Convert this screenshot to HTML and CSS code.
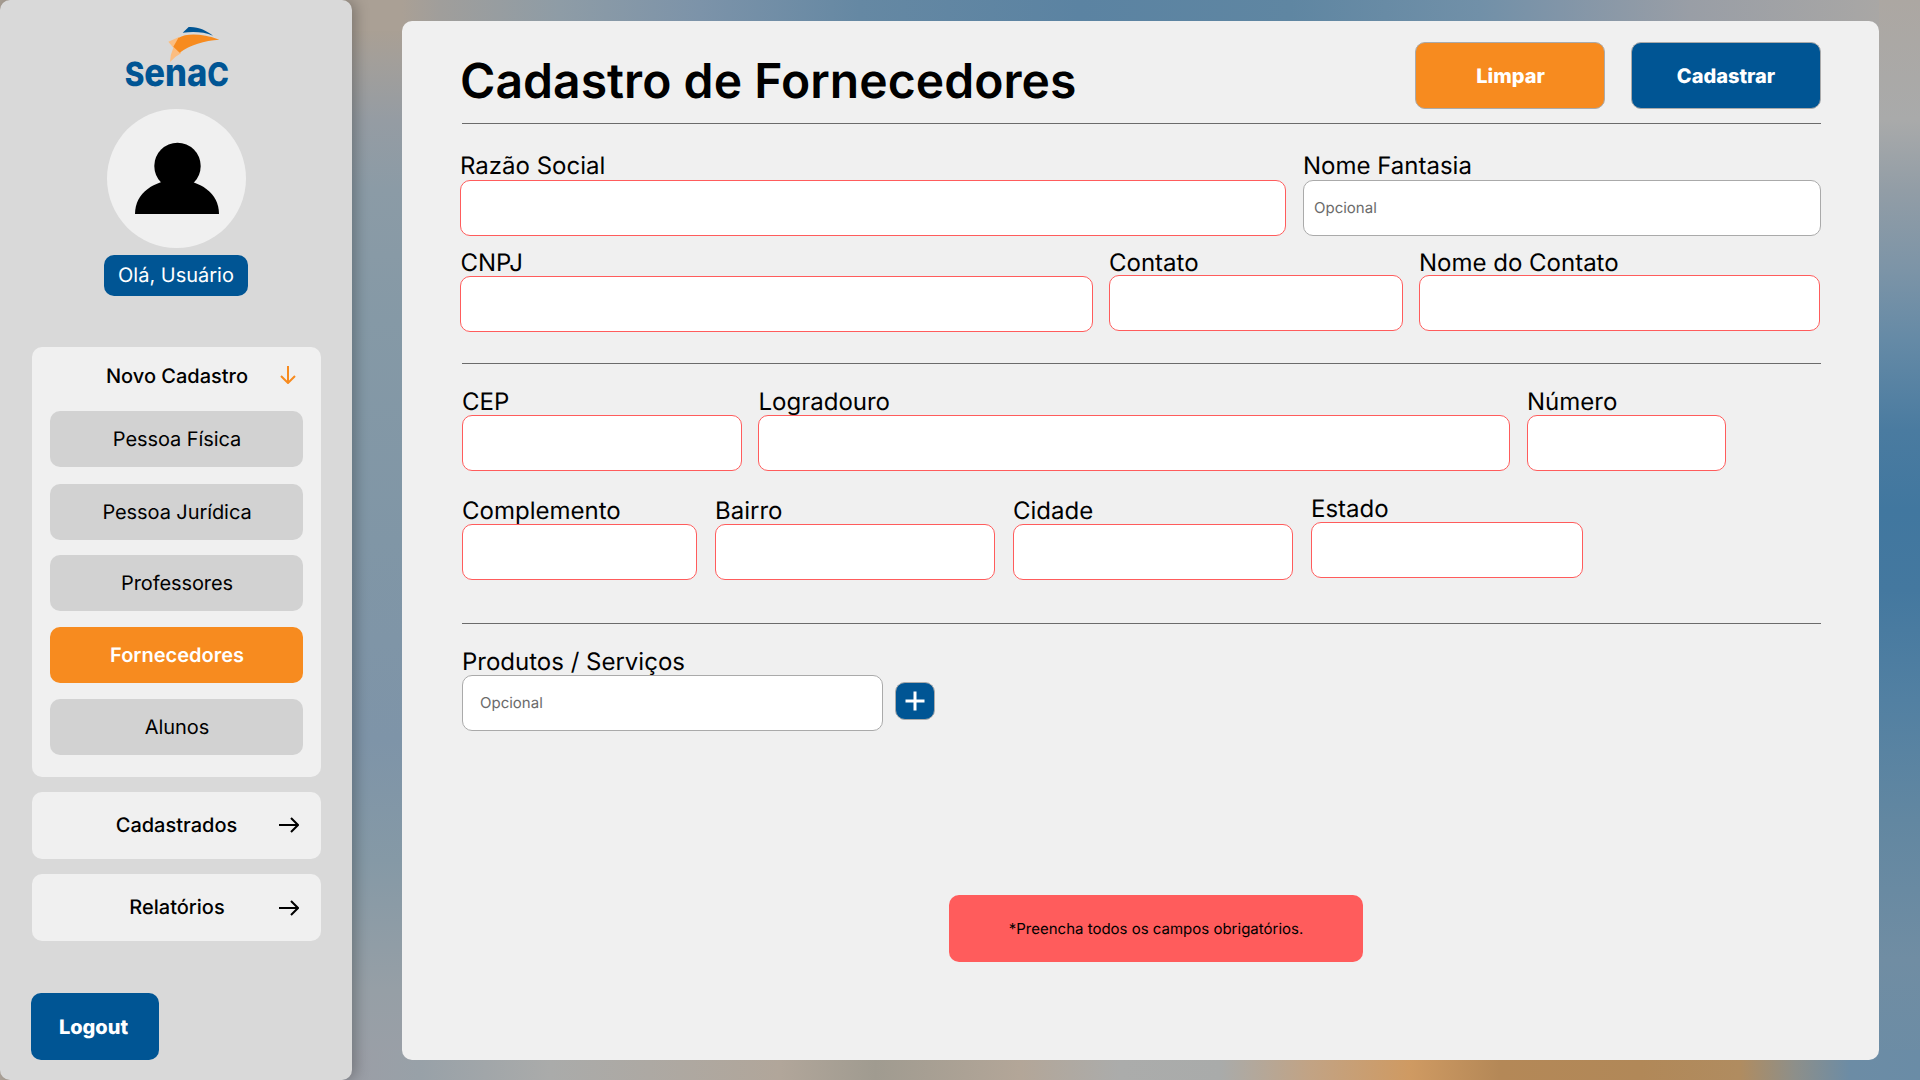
FILE: index.html
```html
<!DOCTYPE html>
<html lang="pt-BR">
<head>
<meta charset="utf-8">
<title>Cadastro de Fornecedores</title>
<link rel="stylesheet" href="styles.css">
</head>
<body>
<aside class="sidebar">
  <svg class="logo" viewBox="0 0 312 186" role="img" aria-label="Senac">
    <path fill="#fbbd80" d="M130 47 162 33 168 82 Q148 93 135 108 Q136 84 145 65Z"/>
    <path fill="#f78b1f" d="M160 36 C185 21 230 22 283 41 C238 43 195 57 164 80 L145 62Z"/>
    <path fill="#005594" d="M173 20 191 3 C218 1 246 14 264 29 C237 17 204 17 173 20Z"/>
    <text class="logo-word" x="-1" y="180" textLength="313" lengthAdjust="spacingAndGlyphs"><tspan font-size="100">S</tspan><tspan font-size="116">ena</tspan><tspan font-size="98">C</tspan></text>
  </svg>
  <div class="avatar">
    <svg viewBox="0 0 84 72" width="84" height="72"><circle cx="42.5" cy="24" r="23.2"/><path d="M0 72C0 51 19 38 42 38S84 51 84 72Z"/></svg>
  </div>
  <div class="greeting">Olá, Usuário</div>
  <nav class="menu">
    <section class="menu-group">
      <div class="menu-head">Novo Cadastro
        <svg class="arrow-down" viewBox="0 0 16 18"><path d="M8 0V16.5M1 10 8 17 15 10"/></svg>
      </div>
      <a class="item">Pessoa Física</a>
      <a class="item item-second">Pessoa Jurídica</a>
      <a class="item item-third">Professores</a>
      <a class="item active">Fornecedores</a>
      <a class="item">Alunos</a>
    </section>
    <a class="menu-link">Cadastrados
      <svg class="arrow-right" viewBox="0 0 20 16"><path d="M0 8H19M12 1 19 8 12 15"/></svg>
    </a>
    <a class="menu-link reports">Relatórios
      <svg class="arrow-right" viewBox="0 0 20 16"><path d="M0 8H19M12 1 19 8 12 15"/></svg>
    </a>
  </nav>
  <button class="logout">Logout</button>
</aside>
<main class="panel">
  <header class="panel-head">
    <h1>Cadastro de Fornecedores</h1>
    <div class="actions">
      <button class="btn btn-orange">Limpar</button>
      <button class="btn btn-blue">Cadastrar</button>
    </div>
  </header>
  <hr>
  <form class="form">
    <div class="row row-company">
      <div class="field"><label>Razão Social</label><input></div>
      <div class="field"><label>Nome Fantasia</label><input class="optional" placeholder="Opcional"></div>
    </div>
    <div class="row row-contact">
      <div class="field cnpj"><label>CNPJ</label><input></div>
      <div class="field"><label>Contato</label><input></div>
      <div class="field"><label>Nome do Contato</label><input></div>
    </div>
    <hr class="rule-address">
    <div class="row row-street">
      <div class="field"><label>CEP</label><input></div>
      <div class="field"><label class="nudge">Logradouro</label><input></div>
      <div class="field"><label>Número</label><input></div>
    </div>
    <div class="row row-city">
      <div class="field"><label>Complemento</label><input></div>
      <div class="field"><label>Bairro</label><input></div>
      <div class="field"><label>Cidade</label><input></div>
      <div class="field state"><label>Estado</label><input></div>
    </div>
    <hr class="rule-products">
    <div class="row row-products">
      <div class="field"><label>Produtos / Serviços</label><input class="optional" placeholder="Opcional"></div>
      <button type="button" class="add" aria-label="Adicionar"><svg viewBox="0 0 20 20" width="20" height="20"><path d="M10 .5V19.5M.5 10H19.5"/></svg></button>
    </div>
  </form>
  <div class="alert">*Preencha todos os campos obrigatórios.</div>
</main>
</body>
</html>
```
FILE: styles.css
```css
* { box-sizing: border-box; }

body {
  margin: 0;
  width: 1920px;
  height: 1080px;
  overflow: hidden;
  display: flex;
  font-family: Inter, "Liberation Sans", sans-serif;
  text-rendering: geometricPrecision;
  color: #000;
  background:
    linear-gradient(90deg, #aaa095 402px, #a09e9b 440px, #8e9ca6 560px, #7c93a9 700px, #6588a3 860px, #5b83a2 1080px, #5f86a2 1290px, #7190a8 1480px, #8195a8 1560px, #999ea6 1690px, #a9a7a5 1879px) 0 0 / 1879px 31px no-repeat,
    linear-gradient(90deg, #b0a69c 0, #9b9ea6 352px, #98a1a8 420px, #aaabaa 550px, #b1a69a 780px, #a09b90 875px, #b3a698 1020px, #abacab 1120px, #a9abaa 1220px, #c2a384 1310px, #cf9a62 1410px, #b48857 1500px, #b18858 1640px, #b08c60 1740px, #8d8f8a 1795px, #6c8ca5 1850px, #6a8ca6 1920px) 0 1050px / 1920px 30px no-repeat,
    linear-gradient(180deg, #b0a08e 0, #a39f9a 60px, #959ca3 120px, #8b9ba6 190px, #8599a6 320px, #8096a6 540px, #7e94a8 740px, #8599a6 860px, #969fa6 990px, #9b9fa7 1080px) 0 0 / 402px 1080px no-repeat,
    linear-gradient(180deg, #aca7a2 0, #a9aaaa 120px, #929da6 190px, #7c94a7 270px, #658aa6 340px, #4a7ba0 430px, #41779f 510px, #44789f 590px, #5280a2 700px, #6287a1 820px, #708da3 960px, #6b8ca5 1080px) 1879px 0 / 41px 1080px no-repeat;
}

.sidebar {
  width: 352px;
  height: 1080px;
  display: flex;
  flex-direction: column;
  align-items: center;
  padding-top: 26px;
  background: #d9d9d9;
  border-radius: 10px;
  box-shadow: 4px 0 14px rgba(0, 0, 0, .25);
}

.logo {
  width: 104px;
  height: 62px;
  margin-left: 2px;
  overflow: visible;
}

.logo-word {
  fill: #005594;
  font-family: Inter, sans-serif;
  font-weight: 800;
}

.avatar {
  width: 139px;
  height: 139px;
  margin-top: 21px;
  padding: 33px 0 0 2px;
  border-radius: 50%;
  background: #f0f0f0;
  display: flex;
  justify-content: center;
}

.greeting {
  width: 144px;
  height: 41px;
  margin-top: 7px;
  border-radius: 10px;
  background: #005594;
  color: #fff;
  font-size: 20px;
  line-height: 40px;
  text-align: center;
}

.menu {
  width: 289px;
  margin-top: 51px;
  margin-left: 1px;
  display: flex;
  flex-direction: column;
  gap: 15px;
  font-size: 20px;
  font-weight: 500;
}

.menu-group {
  height: 430px;
  padding: 0 18px;
  background: #f0f0f0;
  border-radius: 10px;
}

.menu-head {
  position: relative;
  height: 64px;
  padding: 17px 0 0 1px;
  line-height: 24px;
  text-align: center;
}

.arrow-down {
  position: absolute;
  top: 19px;
  right: 7px;
  width: 16px;
  height: 18px;
  fill: none;
  stroke: #f78b1f;
  stroke-width: 2;
}

.item {
  display: block;
  height: 56px;
  margin-bottom: 16px;
  padding-left: 1px;
  border-radius: 10px;
  background: #d2d2d2;
  font-weight: 400;
  line-height: 56px;
  letter-spacing: -.08px;
  text-align: center;
}

.item-second { margin-top: 17px; margin-bottom: 15px; }

.item.active {
  background: #f78b1f;
  color: #fff;
  font-weight: 600;
  letter-spacing: 0;
}

.menu-link {
  position: relative;
  height: 67px;
  border-radius: 10px;
  background: #f0f0f0;
  line-height: 66px;
  text-align: center;
}

.arrow-right {
  position: absolute;
  top: 25px;
  right: 22px;
  width: 20px;
  height: 16px;
  fill: none;
  stroke: #000;
  stroke-width: 2;
}

.reports { padding-left: 1px; }
.reports .arrow-right { top: 26px; }

button {
  padding: 0;
  font: 800 20px/24px Inter, sans-serif;
  text-rendering: inherit;
  color: #fff;
  border-radius: 10px;
}

.logout {
  align-self: flex-start;
  width: 128px;
  height: 67px;
  margin: 52px 0 0 31px;
  padding-right: 3px;
  border: 0;
  background: #005594;
}

.panel {
  width: 1477px;
  height: 1039px;
  margin: 21px 0 0 50px;
  padding: 21px 58px 0;
  background: #f0f0f0;
  border-radius: 10px;
}

.panel-head {
  height: 81px;
  display: flex;
  justify-content: space-between;
}

h1 {
  margin: 10px 0 0;
  font-size: 48px;
  font-weight: 600;
  line-height: 58px;
  letter-spacing: .06px;
}

.actions {
  display: flex;
  gap: 26px;
}

.btn {
  width: 190px;
  height: 67px;
  border: 1px solid #aaa;
}

.btn-orange { background: #f78b1f; padding-left: 1px; }
.btn-blue { background: #005594; }

hr {
  height: 1px;
  margin: 0 0 27px 2px;
  border: 0;
  background: #6b6b6b;
}

.rule-address { margin: 31px 0 23px 2px; }
.rule-products { margin: 43px 0 23px 2px; }

.row { display: grid; }

.row-company {
  grid-template-columns: 826px 518px;
  column-gap: 17px;
}

.row-contact {
  grid-template-columns: 633px 294px 401px;
  column-gap: 16px;
  margin-top: 12px;
}

.row-street {
  grid-template-columns: 280px 752px 199px;
  column-gap: 16px;
  margin-left: 2px;
}

.row-street .field:last-child { margin: 0 -1px 0 1px; }

.row-city {
  grid-template-columns: 235px 280px 280px 272px;
  column-gap: 18px;
  align-items: end;
  margin: 23px 0 0 2px;
}

.row-products {
  grid-template-columns: 421px 40px;
  column-gap: 12px;
  margin-left: 2px;
}

.field {
  display: flex;
  flex-direction: column;
}

label {
  height: 28px;
  font-size: 24px;
  line-height: 29px;
  white-space: nowrap;
}

.row-company label { height: 29px; }
.row-contact label { height: 27px; }
.row-contact .cnpj label { height: 28px; margin-left: .5px; }
.row-city .state { margin-bottom: 2px; }
.nudge { margin-left: .5px; }

input {
  width: 100%;
  height: 56px;
  padding: 0 17px 2px;
  border: 1px solid #ff5c5c;
  border-radius: 10px;
  background: #fff;
  font: 15px Inter, sans-serif;
  text-rendering: inherit;
}

.optional { border-color: #aaa; }
.row-company .optional { padding: 0 10px 2px; }
.optional::placeholder { color: #6b6b6b; }

.add {
  width: 40px;
  height: 38px;
  margin-top: 35px;
  border: 1px solid #aaa;
  background: #005594;
  display: flex;
  align-items: center;
  justify-content: center;
}

.add path {
  fill: none;
  stroke: #fff;
  stroke-width: 3;
}

.alert {
  width: 414px;
  height: 67px;
  margin: 164px 0 0 489px;
  border-radius: 10px;
  background: #ff5c5c;
  font-size: 15px;
  line-height: 67px;
  text-align: center;
}
```
